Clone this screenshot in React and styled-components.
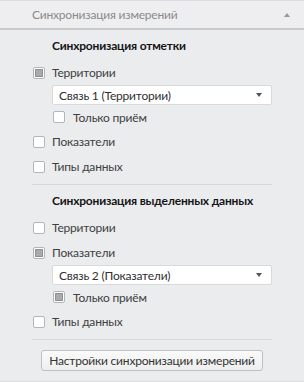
import React from 'react';
import styled, { createGlobalStyle } from 'styled-components';

const GlobalStyle = createGlobalStyle`
  html, body {
    margin: 0;
    padding: 0;
    background: #ebecee;
  }
  body {
    font-family: Lato, 'Noto Sans', sans-serif;
    font-size: 12px;
    letter-spacing: -0.2px;
    color: #3c3c3c;
  }
`;

const Panel = styled.div`
  width: 304px;
  height: 382px;
  box-sizing: border-box;
  background: #ebecee;
  border-top: 1px solid #dcdcde;
  border-bottom: 1px solid #dcdcde;
  display: flex;
  flex-direction: column;
`;

const Header = styled.div`
  height: 27px;
  display: flex;
  align-items: center;
  justify-content: space-between;
  padding: 0 14px 0 32px;
  background: #eeeef0;
  border-bottom: 2px solid #c9cacc;
  color: #8a8a8a;
`;

const Caret = styled.span`
  width: 0;
  height: 0;
  border-left: 3.5px solid transparent;
  border-right: 3.5px solid transparent;
  ${({ down }) =>
    down ? 'border-top: 4px solid #555;' : 'border-bottom: 4px solid #999;'}
`;

const Body = styled.div`
  padding: 0 32px;
  display: flex;
  flex-direction: column;
`;

const Section = styled.div`
  display: flex;
  flex-direction: column;
  padding: 2px 0 5px;
  border-bottom: 1px solid #d6d7d9;
`;

const Heading = styled.div`
  font-weight: 700;
  color: #151515;
  height: 28px;
  line-height: 28px;
  padding-left: 20px;
  white-space: nowrap;
`;

const Row = styled.label`
  display: flex;
  align-items: center;
  gap: ${({ nested }) => (nested ? '8px' : '7px')};
  height: ${({ nested }) => (nested ? '24px' : '25px')};
  padding-left: ${({ nested }) => (nested ? '21px' : '1px')};
  color: #404040;
  white-space: nowrap;
`;

const Box = styled.span`
  width: 10px;
  height: 10px;
  border: 1px solid #b4b5b7;
  border-radius: 2px;
  background: #ffffff;
  display: flex;
  align-items: center;
  justify-content: center;

  &::after {
    content: '';
    display: ${({ checked }) => (checked ? 'block' : 'none')};
    width: 8px;
    height: 8px;
    border-radius: 1px;
    background: #a9aaac;
    box-shadow: inset 0 0 0 1px #8f9092;
  }
`;

const Select = styled.div`
  margin: 0 0 0 20px;
  height: 18px;
  border: 1px solid #d8d9db;
  border-radius: 2px;
  background: #ffffff;
  display: flex;
  align-items: center;
  justify-content: space-between;
  padding: 0 9px 0 6px;
  color: #303030;
`;

const Footer = styled.div`
  display: flex;
  justify-content: center;
  padding-top: 10px;
`;

const Button = styled.button`
  width: 222px;
  height: 21px;
  border: 1px solid #bfc0c2;
  border-radius: 3px;
  background: linear-gradient(#fafafa, #eeeeee);
  font-family: inherit;
  font-size: 12px;
  letter-spacing: inherit;
  color: #333;
  padding: 0;
  white-space: nowrap;
`;

const Check = ({ checked, nested, children }) => (
  <Row nested={nested}>
    <Box checked={checked} />
    {children}
  </Row>
);

const Dropdown = ({ value }) => (
  <Select>
    {value}
    <Caret down />
  </Select>
);

const App = () => (
  <>
    <GlobalStyle />
    <Panel>
      <Header>
        Синхронизация измерений
        <Caret />
      </Header>
      <Body>
        <Section>
          <Heading>Синхронизация отметки</Heading>
          <Check checked>Территории</Check>
          <Dropdown value="Связь 1 (Территории)" />
          <Check nested>Только приём</Check>
          <Check>Показатели</Check>
          <Check>Типы данных</Check>
        </Section>
        <Section>
          <Heading>Синхронизация выделенных данных</Heading>
          <Check>Территории</Check>
          <Check checked>Показатели</Check>
          <Dropdown value="Связь 2 (Показатели)" />
          <Check nested checked>Только приём</Check>
          <Check>Типы данных</Check>
        </Section>
      </Body>
      <Footer>
        <Button>Настройки синхронизации измерений</Button>
      </Footer>
    </Panel>
  </>
);

export default App;
